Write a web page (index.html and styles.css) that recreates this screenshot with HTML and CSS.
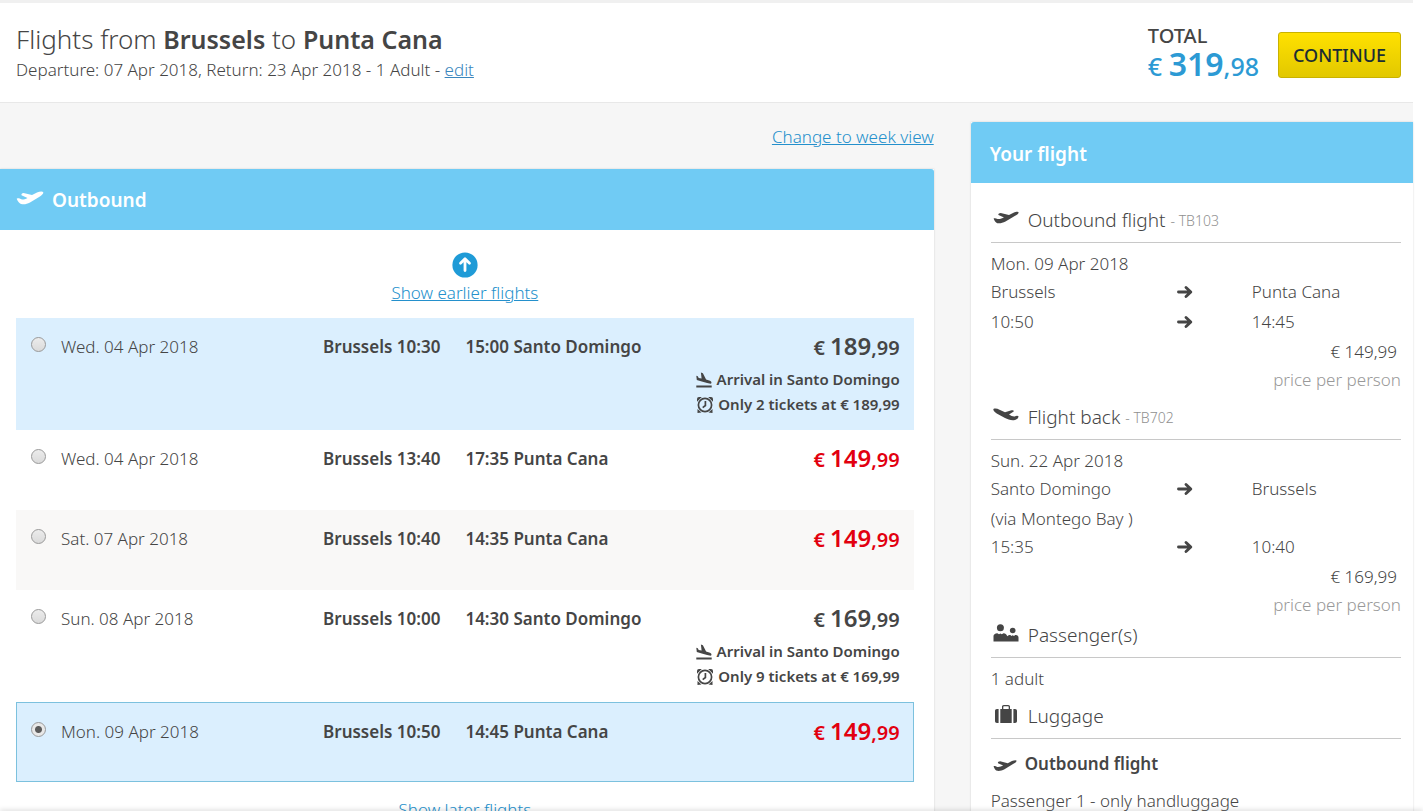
FILE: index.html
```html
<!DOCTYPE html>
<html lang="en">
<head>
    <meta charset="UTF-8">
    <meta name="viewport" content="width=device-width, initial-scale=1.0">
    <title>Flights from Brussels to Punta Cana</title>
    <link rel="stylesheet" href="styles.css">
</head>
<body>
    <!-- Icon set -->
    <svg class="sprite" aria-hidden="true">
        <symbol id="plane-up" viewBox="0 0 28 14">
            <path d="M1 8.500C.3 7.500 1 7.300 3 7.300L6 8.600C8 8.600 9.500 8 11.500 7L5.500 4.200C5 3 6 2.300 7.500 2L16 4L21 1.500C23.500.5 26.500 0 27.300 1.200C27.600 2.800 25.500 4.300 23.500 5.700L14 11.500C10.500 13.500 7.500 13.500 5 12.900C3.300 12.500 2 10.500 1 8.500Z"/>
        </symbol>
        <symbol id="plane-out" viewBox="0 0 26 13">
            <path d="M.6 7.600C1.500 6.800 3 7.200 4.500 8C7 8.300 9 7.500 11 6.500L5.500 4C4.800 3 6 2.200 7.700 2L16 4L20.500 1.700C23 .7 25.200.3 25.600 1.300C25.700 2.700 23.700 3.900 21.700 5L12.500 10.600C9.500 12.300 6.500 12.600 4.300 12.200C2.700 11.900 1.300 9.500.6 7.600Z"/>
        </symbol>
        <symbol id="plane-back" viewBox="0 0 26 13">
            <path d="M.4 1C2 0 4.500.6 6.500 1.700L12 4.200L18.500 2.200C20.300 1.900 21.500 2.600 20.300 3.700L16 6.500C18 7.800 20 8.600 21.700 8.400C23 7.600 25 7.300 25.600 8.400C25 10.700 22.800 12.300 20.500 12.200C17.500 12.400 14.500 11.300 12 10.100L3.700 5.500C1.700 4.200 0 2.500.4 1Z"/>
        </symbol>
        <symbol id="landing" viewBox="0 0 16 15">
            <path d="M.3 13H15.700V14.900H.3ZM.3 3.300L1.800 3.700L2.700 5.400L5.600 6L4.900.1L6.900.7L10.100 7L14 8.200C15.800 8.900 15.900 10.600 14.700 11.300C10 10.400 5 8.900.8 7.600Z"/>
        </symbol>
        <symbol id="clock" viewBox="0 0 16 16">
            <g fill="none" stroke="currentColor" stroke-width="1.700">
                <circle cx="8" cy="8" r="6.600"/>
                <path d="M8.400 4V8.500L5.700 10.600"/>
            </g>
            <path d="M0 4.800V2Q0 0 2 0H4.800ZM16 4.800V2Q16 0 14 0H11.200ZM.5 16V12L4.500 15.500ZM15.500 16V12L11.500 15.500Z"/>
        </symbol>
        <symbol id="arrow" viewBox="0 0 16 14">
            <path d="M1.500 7H13M9 2.500L13.800 7L9 11.500" fill="none" stroke="currentColor" stroke-width="2.900" stroke-linecap="round" stroke-linejoin="round"/>
        </symbol>
        <symbol id="circle-up" viewBox="0 0 26 26">
            <circle cx="13" cy="13" r="12.600" fill="#1f9bd7"/>
            <path d="M13 18.500V7.500M8.500 11.300L13 6.800L17.500 11.300" fill="none" stroke="#fff" stroke-width="2.800" stroke-linecap="round" stroke-linejoin="round"/>
        </symbol>
        <symbol id="people" viewBox="0 0 26 18">
            <circle cx="7.400" cy="3.700" r="3.500"/>
            <circle cx="19.700" cy="6.500" r="2.800"/>
            <path d="M.5 17.500V12C.5 10.500 2 9.500 4.300 9.200L6 10.300L7.400 9.500L8.800 10.300L10.500 9.200C12.500 9.500 14 10.500 14.200 12.300C15 11.500 16.200 11 17.300 11L18.500 12L19.700 11.300L21 12L22.200 11C24 11.100 25.500 12 25.500 13.500V17.500Z"/>
        </symbol>
        <symbol id="suitcase" viewBox="0 0 26 18">
            <path d="M7.300 4H9V1.800C9 .7 9.700 0 10.800 0H15.200C16.300 0 17 .7 17 1.800V4H18.700V18H7.300ZM10.300 4H15.700V1.800L15.200 1.300H10.800L10.300 1.800ZM5.600 4V18H4C2.700 18 2 17.300 2 16V6C2 4.700 2.700 4 4 4ZM20.400 4H22C23.300 4 24 4.700 24 6V16C24 17.300 23.300 18 22 18H20.400Z" fill-rule="evenodd"/>
        </symbol>
    </svg>

    <header class="topbar">
        <div>
            <h1>Flights from <b>Brussels</b> to <b>Punta Cana</b></h1>
            <p class="trip">Departure: 07 Apr 2018, Return: 23 Apr 2018 - 1 Adult - <a href="#edit">edit</a></p>
        </div>
        <div class="checkout">
            <div class="total">
                <span class="total-label">TOTAL</span>
                <span class="total-price">€ <b>319</b>,98</span>
            </div>
            <button type="button" class="continue">CONTINUE</button>
        </div>
    </header>

    <div class="page">
        <main>
            <p class="week-view"><a href="#week">Change to week view</a></p>
            <section class="panel">
                <h2 class="panel-title"><svg class="icon-title"><use href="#plane-up"/></svg>Outbound</h2>
                <div class="flights">
                    <a class="more" href="#earlier"><svg class="icon-circle"><use href="#circle-up"/></svg><span>Show earlier flights</span></a>

                    <label class="flight flight-tall flight-blue">
                        <input type="radio" name="outbound">
                        <span class="date">Wed. 04 Apr 2018</span>
                        <span class="from">Brussels 10:30</span>
                        <span class="to">15:00 Santo Domingo</span>
                        <span class="price">€ <b>189</b>,99</span>
                        <span class="notes">
                            <span><svg class="icon-note"><use href="#landing"/></svg>Arrival in Santo Domingo</span>
                            <span><svg class="icon-note"><use href="#clock"/></svg>Only 2 tickets at € 189,99</span>
                        </span>
                    </label>
                    <label class="flight">
                        <input type="radio" name="outbound">
                        <span class="date">Wed. 04 Apr 2018</span>
                        <span class="from">Brussels 13:40</span>
                        <span class="to">17:35 Punta Cana</span>
                        <span class="price price-low">€ <b>149</b>,99</span>
                    </label>
                    <label class="flight flight-grey">
                        <input type="radio" name="outbound">
                        <span class="date">Sat. 07 Apr 2018</span>
                        <span class="from">Brussels 10:40</span>
                        <span class="to">14:35 Punta Cana</span>
                        <span class="price price-low">€ <b>149</b>,99</span>
                    </label>
                    <label class="flight flight-tall">
                        <input type="radio" name="outbound">
                        <span class="date">Sun. 08 Apr 2018</span>
                        <span class="from">Brussels 10:00</span>
                        <span class="to">14:30 Santo Domingo</span>
                        <span class="price">€ <b>169</b>,99</span>
                        <span class="notes">
                            <span><svg class="icon-note"><use href="#landing"/></svg>Arrival in Santo Domingo</span>
                            <span><svg class="icon-note"><use href="#clock"/></svg>Only 9 tickets at € 169,99</span>
                        </span>
                    </label>
                    <label class="flight flight-blue flight-selected">
                        <input type="radio" name="outbound" checked>
                        <span class="date">Mon. 09 Apr 2018</span>
                        <span class="from">Brussels 10:50</span>
                        <span class="to">14:45 Punta Cana</span>
                        <span class="price price-low">€ <b>149</b>,99</span>
                    </label>

                    <a class="more more-later" href="#later"><span>Show later flights</span></a>
                </div>
            </section>
        </main>

        <aside class="summary">
            <h2 class="panel-title">Your flight</h2>
            <div class="summary-body">
                <h3><svg class="icon-plane"><use href="#plane-out"/></svg>Outbound flight <small>- TB103</small></h3>
                <p>Mon. 09 Apr 2018</p>
                <div class="leg">
                    <span>Brussels</span>
                    <svg class="icon-arrow"><use href="#arrow"/></svg>
                    <span>Punta Cana</span>
                </div>
                <div class="leg leg-time">
                    <span>10:50</span>
                    <svg class="icon-arrow"><use href="#arrow"/></svg>
                    <span>14:45</span>
                </div>
                <p class="leg-price">€ 149,99</p>
                <p class="per-person">price per person</p>

                <h3><svg class="icon-plane"><use href="#plane-back"/></svg>Flight back <small>- TB702</small></h3>
                <p>Sun. 22 Apr 2018</p>
                <div class="leg">
                    <span>Santo Domingo</span>
                    <svg class="icon-arrow"><use href="#arrow"/></svg>
                    <span>Brussels</span>
                </div>
                <p class="via">(via Montego Bay )</p>
                <div class="leg">
                    <span>15:35</span>
                    <svg class="icon-arrow"><use href="#arrow"/></svg>
                    <span>10:40</span>
                </div>
                <p class="leg-price">€ 169,99</p>
                <p class="per-person">price per person</p>

                <h3 class="tight"><svg class="icon-people"><use href="#people"/></svg>Passenger(s)</h3>
                <p>1 adult</p>

                <h3><svg class="icon-people"><use href="#suitcase"/></svg>Luggage</h3>
                <h4><svg class="icon-plane"><use href="#plane-out"/></svg>Outbound flight</h4>
                <p>Passenger 1 - only handluggage</p>
            </div>
        </aside>
    </div>

    <div class="bottom-bar"></div>
</body>
</html>
```
FILE: styles.css
```css
* {
    box-sizing: border-box;
}
body {
    margin: 0;
    padding-right: 10px;
    height: 100vh;
    overflow: hidden;
    background-color: white;
    color: #454545;
    font-family: "Noto Sans", "Open Sans", sans-serif;
    font-weight: 300;
    font-size: 17px;
    line-height: 28px;
}
h1, h2, h3, h4, p {
    margin: 0;
    font-weight: 300;
}
b {
    font-weight: 600;
}
a {
    color: #2490cc;
}
svg {
    fill: currentColor;
    flex-shrink: 0;
}
.sprite {
    display: none;
}

/* Top bar */
.topbar {
    display: flex;
    justify-content: space-between;
    height: 103px;
    padding: 19px 12px 0 16px;
    border-top: 3px solid #f0f0f0;
    border-bottom: 1px solid #e8e8e8;
}
.topbar h1 {
    font-size: 26px;
    line-height: 34px;
}
.topbar h1 b {
    font-size: 25px;
}
.trip {
    font-weight: 350;
    line-height: 28px;
}
.trip a {
    color: #3a86bd;
}
.checkout {
    display: flex;
    gap: 19px;
}
.total-label, .total-price {
    display: block;
}
.total-label {
    font-size: 20px;
    font-weight: 500;
    line-height: 28px;
}
.total-price {
    color: #2c9ad4;
    font-size: 25px;
    font-weight: 500;
    line-height: 28px;
}
.total-price b {
    font-size: 32px;
}
.continue {
    width: 123px;
    height: 46px;
    margin-top: 10px;
    padding: 0;
    border: 1px solid #c9b200;
    border-radius: 3px;
    background: linear-gradient(#ffe100, #e2c800);
    color: #1b2d33;
    font-family: inherit;
    font-size: 18px;
    font-weight: 500;
    cursor: pointer;
}

/* Page columns */
.page {
    display: grid;
    grid-template-columns: minmax(0, 19fr) minmax(0, 9fr);
    gap: 37px;
    background-color: #f6f6f6;
}
.week-view {
    padding: 20px 0 18px;
    text-align: right;
}
.panel, .summary {
    background-color: white;
    box-shadow: 0 0 2px rgba(0,0,0,0.15);
}
.panel-title {
    display: flex;
    align-items: center;
    height: 61px;
    padding: 2px 19px 0;
    border-radius: 3px 0 0 0;
    background-color: #70cbf4;
    color: white;
    font-size: 19px;
    font-weight: 600;
}
.panel .panel-title {
    padding: 0 16px;
    border-radius: 0 3px 0 0;
}

/* Flight list */
.flights {
    padding: 22px 20px 0 16px;
}
.more {
    display: flex;
    flex-direction: column;
    align-items: center;
    height: 66px;
}
.more-later {
    padding-top: 14px;
}
.flight {
    display: grid;
    grid-template-columns: 31px 19fr 19fr 24fr 22fr;
    grid-template-rows: 32px auto;
    align-content: start;
    min-height: 80px;
    padding: 12px 14px 0;
    line-height: 32px;
}
.flight-tall {
    min-height: 112px;
}
.flight-blue {
    background-color: #dbeffe;
}
.flight-grey {
    background-color: #f9f8f7;
}
.flight-selected {
    border: 1px solid #7cc1de;
    padding: 12px 13px 0;
}
.flight input {
    appearance: none;
    width: 15px;
    height: 15px;
    margin: 7px 0 0 1px;
    border: 1px solid #999;
    border-radius: 50%;
    background: linear-gradient(#ececec, #dadada);
}
.flight input:checked {
    background: radial-gradient(circle, #5a5a5a 3px, #e8e8e8 4px);
}
.date, .from, .to {
    padding-top: 1px;
}
.from, .to {
    font-weight: 600;
}
.from {
    text-align: right;
}
.to {
    padding-left: 25px;
}
.price {
    font-size: 20px;
    font-weight: 600;
    text-align: right;
}
.price b {
    font-size: 24px;
}
.price-low {
    color: #e2000f;
}
.notes {
    grid-column: 1 / -1;
    padding-top: 5px;
    font-size: 15px;
    font-weight: 600;
    line-height: 25px;
}
.notes span {
    display: flex;
    align-items: center;
    justify-content: flex-end;
    gap: 5px;
}

/* Your flight */
.summary {
    margin-top: 19px;
}
.summary-body {
    padding: 14px 12px 0 20px;
}
.summary h3 {
    display: flex;
    align-items: center;
    height: 46px;
    margin-bottom: 7px;
    border-bottom: 1px solid #c8c8c8;
    font-size: 19px;
}
.summary h3.tight {
    height: 39px;
    padding-bottom: 6px;
}
.summary h3 small {
    margin: 3px 0 0 5px;
    color: #909090;
    font-size: 14px;
}
.summary h4 {
    display: flex;
    align-items: center;
    height: 36px;
    margin-bottom: 5px;
    font-weight: 600;
}
.leg {
    display: grid;
    grid-template-columns: 5fr 2fr 4fr;
    align-items: center;
}
.leg-time, .via {
    padding-top: 2px;
}
.leg-price {
    padding: 2px 4px 0 0;
    text-align: right;
}
.per-person {
    color: #999;
    text-align: right;
}

/* Icon sizes */
.icon-title {
    width: 28px;
    height: 14px;
    margin: 0 8px 4px 0;
}
.icon-circle {
    width: 26px;
    height: 26px;
    margin-bottom: 1px;
}
.icon-note {
    width: 16px;
    height: 16px;
}
.icon-arrow {
    width: 16px;
    height: 14px;
}
.icon-plane {
    width: 26px;
    height: 13px;
    margin: 0 9px 4px 2px;
}
.icon-people {
    width: 26px;
    height: 18px;
    margin: 0 9px 4px 2px;
}
.summary h4 .icon-plane {
    width: 24px;
    margin: 2px 8px 0 2px;
}

.bottom-bar {
    position: fixed;
    right: 0;
    bottom: 0;
    left: 0;
    height: 1px;
    background-color: white;
    box-shadow: 0 0 5px rgba(0,0,0,0.5);
}
```
